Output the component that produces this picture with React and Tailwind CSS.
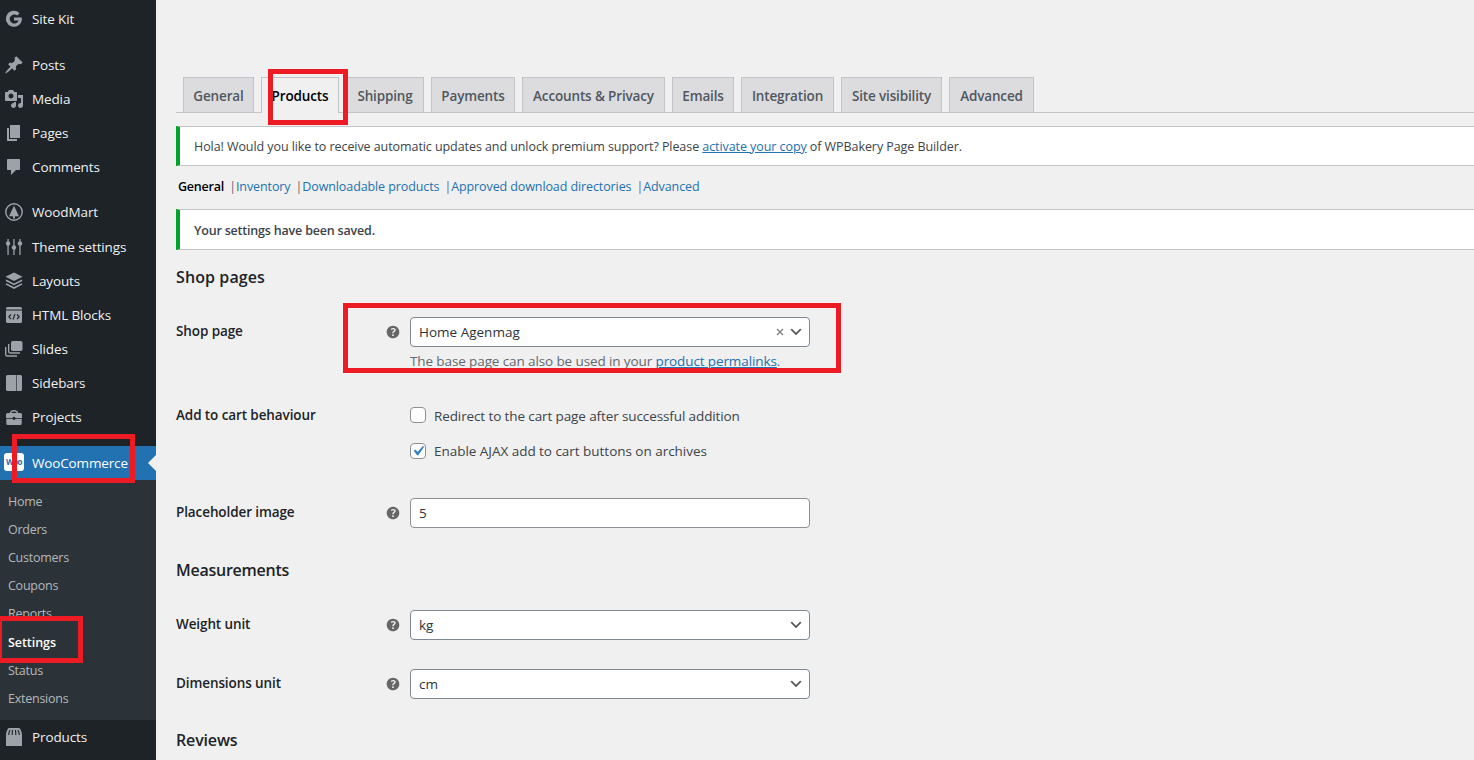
import React from "react";

function Icon({ children, className = "h-5 w-5" }) {
  return (
    <svg viewBox="0 0 20 20" className={"shrink-0 " + className} fill="currentColor">
      {children}
    </svg>
  );
}

const icons = {
  sitekit: <path d="M17.800 8.500H10v3.100h4.600a4.600 4.600 0 1 1-1.300-5.100l2.300-2.300A8 8 0 1 0 17.900 10c0-.5 0-1-.1-1.500z" />,
  posts: (
    <path d="M10.44 3.02l1.82-1.82 6.36 6.35-1.83 1.82c-1.05-.68-2.48-.57-3.41.36l-.75.75c-.92.93-1.04 2.35-.35 3.41l-1.83 1.82-2.41-2.41-2.8 2.79c-.42.42-3.38 2.71-3.8 2.29s1.86-3.39 2.28-3.81l2.79-2.79L4.1 9.36l1.83-1.82c1.05.69 2.48.57 3.4-.36l.75-.75c.93-.92 1.05-2.35.36-3.41z" />
  ),
  media: (
    <path d="M13 11V4c0-.55-.45-1-1-1h-1.67L9 1H5L3.67 3H2c-.55 0-1 .45-1 1v7c0 .55.45 1 1 1h10c.55 0 1-.45 1-1zM7 4.5c1.38 0 2.5 1.12 2.5 2.5S8.38 9.5 7 9.5 4.5 8.38 4.5 7 5.62 4.5 7 4.5zM14 6h5v10.500c0 1.38-1.12 2.5-2.5 2.5S14 17.88 14 16.5s1.12-2.5 2.5-2.5c.17 0 .34.02.5.05V9h-3V6zm-4 8.050V13h2v3.500c0 1.38-1.12 2.5-2.5 2.5S7 17.88 7 16.5 8.12 14 9.5 14c.17 0 .34.02.5.050z" />
  ),
  pages: <path d="M6 15V2h10v13H6zm-1 1h8v2H3V5h2v11z" />,
  comments: <path d="M4 2h11c.55 0 1 .45 1 1v9c0 .55-.45 1-1 1h-3l-5 5v-5H4c-.55 0-1-.45-1-1V3c0-.55.45-1 1-1z" />,
  woodmart: (
    <>
      <circle cx="10" cy="10" r="8.200" fill="none" stroke="currentColor" strokeWidth="1.400" />
      <path d="M10 3.800l5 10.400h-4V16.500H9v-2.300H5z" />
    </>
  ),
  theme: (
    <>
      <path d="M3.400 2h1.300v16H3.400zM9.300 2h1.300v16H9.300zM15.300 2h1.300v16h-1.300z" />
      <circle cx="4.050" cy="6.500" r="2.200" />
      <circle cx="9.950" cy="10.500" r="2.200" />
      <circle cx="15.950" cy="6.500" r="2.200" />
    </>
  ),
  layouts: (
    <>
      <path d="M10 1.500l8.500 4.300L10 10.100 1.500 5.800z" />
      <path d="M2 9.300l8 4.100 8-4.100M2 12.900l8 4.100 8-4.100" fill="none" stroke="currentColor" strokeWidth="1.600" />
    </>
  ),
  blocks: (
    <>
      <path d="M3.500 2h13A1.500 1.500 0 0 1 18 3.500V4.600H2V3.500A1.500 1.500 0 0 1 3.500 2zM2 5.400h16v11.100a1.500 1.500 0 0 1-1.500 1.500h-13A1.500 1.500 0 0 1 2 16.500z" />
      <path d="M7 9.500L4.800 11.800 7 14M13 9.500l2.200 2.300L13 14M11 9l-2 5.500" fill="none" stroke="#1d2327" strokeWidth="1.100" />
    </>
  ),
  slides: (
    <>
      <rect x="7" y="2" width="11.500" height="10" rx="1.800" />
      <path d="M4.700 5v7.500a1.500 1.500 0 0 0 1.500 1.500H16M1.700 8v7.500a1.500 1.500 0 0 0 1.500 1.500H13" fill="none" stroke="currentColor" strokeWidth="1.400" />
    </>
  ),
  sidebars: (
    <path d="M3.500 2H12.200v16H3.500A1.500 1.500 0 0 1 2 16.500v-13A1.500 1.500 0 0 1 3.500 2zM12.800 2h3.700A1.500 1.500 0 0 1 18 3.500v13a1.500 1.500 0 0 1-1.500 1.500H12.800z" />
  ),
  projects: (
    <>
      <path d="M6.500 6.500A3.500 2.800 0 0 1 13.500 6.500" fill="none" stroke="currentColor" strokeWidth="1.400" />
      <path d="M3.500 6h13A1.500 1.500 0 0 1 18 7.500v3.500h-6.800V10H8.800v1H2V7.500A1.500 1.500 0 0 1 3.500 6zM2.300 11.800h6.500v1h2.400v-1h6.500v4.700a1.500 1.500 0 0 1-1.500 1.500H3.800a1.500 1.500 0 0 1-1.500-1.500z" />
    </>
  ),
  products: (
    <>
      <path d="M4.500 1h11c1.500 1.500 2.500 4.500 2.500 7v11H2V8c0-2.500 1-5.500 2.500-7z" />
      <path d="M6 3c-1 1.500-1.300 3-1.300 5M8.600 3c-.4 1.500-.4 3-.4 5M11.400 3c.4 1.500.4 3 .4 5M14 3c1 1.500 1.300 3 1.300 5" stroke="#1d2327" strokeWidth="1.100" fill="none" />
    </>
  ),
};

function MenuItem({ icon, label, className = "" }) {
  return (
    <li className={"flex h-[34px] items-center gap-2 pl-1 text-[13.5px] tracking-[-0.12px] text-[#f0f0f1] " + className}>
      <Icon className="h-5 w-5 text-[#9ca2a7]">{icons[icon]}</Icon>
      <span>{label}</span>
    </li>
  );
}

const submenu = ["Home", "Orders", "Customers", "Coupons", "Reports", "Settings", "Status", "Extensions"];

function Sidebar() {
  return (
    <aside className="w-[156px] shrink-0 bg-[#1d2327] pt-[2px]">
      <ul>
        <MenuItem icon="sitekit" label="Site Kit" />
        <MenuItem icon="posts" label="Posts" className="mt-3" />
        <MenuItem icon="media" label="Media" />
        <MenuItem icon="pages" label="Pages" />
        <MenuItem icon="comments" label="Comments" />
        <MenuItem icon="woodmart" label="WoodMart" className="mt-[11px]" />
        <MenuItem icon="theme" label="Theme settings" className="mt-px" />
        <MenuItem icon="layouts" label="Layouts" />
        <MenuItem icon="blocks" label="HTML Blocks" />
        <MenuItem icon="slides" label="Slides" />
        <MenuItem icon="sidebars" label="Sidebars" />
        <MenuItem icon="projects" label="Projects" />
        <li className="relative mt-3 flex h-[34px] items-center gap-2 bg-[#2271b1] pl-1 text-[13.5px] tracking-[-0.15px] text-white">
          <span className="mb-[2px] flex h-[18px] w-5 items-center justify-center rounded-[3px] bg-white text-[8px] leading-none font-bold tracking-[-0.5px] text-[#2271b1]">
            Woo
          </span>
          <span>WooCommerce</span>
          <svg viewBox="0 0 8 16" className="absolute top-[9px] right-0 h-4 w-2" fill="#f0f0f0">
            <path d="M8 0v16L0 8z" />
          </svg>
        </li>
        <li className="h-[240px] bg-[#2c3338] pt-2">
          <ul>
            {submenu.map((s) => (
              <li
                key={s}
                className={
                  "flex h-[28.2px] items-center pl-2 text-[12.5px] " +
                  (s === "Settings" ? "font-semibold tracking-[-0.05px] text-white" : "tracking-[-0.25px] text-[#b5b8bb]")
                }
              >
                {s}
              </li>
            ))}
          </ul>
        </li>
        <MenuItem icon="products" label="Products" />
      </ul>
    </aside>
  );
}

const tabs = [
  ["General", "w-[71px]"],
  ["Products", "w-[78px]"],
  ["Shipping", "w-[78px]"],
  ["Payments", "w-[84px]"],
  ["Accounts & Privacy", "w-[143px]"],
  ["Emails", "w-[62px]"],
  ["Integration", "w-[93px]"],
  ["Site visibility", "w-[101px]"],
  ["Advanced", "w-[85px]"],
];

function Tabs() {
  return (
    <nav className="flex h-9 gap-[7px] border-b border-[#c3c4c7] pl-[7px]">
      {tabs.map(([t, w]) => (
        <div
          key={t}
          className={
            "flex shrink-0 items-center justify-center border border-b-0 border-[#c3c4c7] text-[13.5px] font-semibold tracking-[-0.15px] whitespace-nowrap " +
            w +
            (t === "Products" ? " h-9 bg-[#f0f0f0] pt-px text-black" : " h-[35px] bg-[#dcdcde] pt-[2px] text-[#50575e]")
          }
        >
          {t}
        </div>
      ))}
    </nav>
  );
}

function Help() {
  return (
    <Icon className="h-[18px] w-[18px] text-[#666]">
      <path d="M17 10c0-3.870-3.140-7-7-7-3.870 0-7 3.130-7 7s3.130 7 7 7c3.860 0 7-3.130 7-7zm-6.300 1.480H9.140v-.43c0-.38.08-.7.24-.98s.46-.57.88-.89c.41-.29.68-.53.81-.71.14-.18.2-.39.2-.62 0-.25-.09-.44-.28-.58-.19-.13-.45-.19-.79-.19-.58 0-1.250.19-2 .57l-.64-1.280c.87-.49 1.800-.74 2.770-.74.81 0 1.450.2 1.920.58.48.39.71.91.71 1.550 0 .43-.09.8-.29 1.110-.19.32-.57.67-1.110 1.060-.38.28-.61.49-.71.63-.1.15-.15.34-.15.57v.35zm-1.470 2.740c-.18-.17-.27-.42-.27-.73 0-.33.08-.58.26-.75s.43-.25.77-.25c.32 0 .57.09.75.26s.27.42.27.74c0 .3-.09.55-.27.72-.18.18-.43.27-.75.27-.33 0-.58-.09-.76-.26z" />
    </Icon>
  );
}

function Row({ label, help, className, children }) {
  return (
    <div className={"flex " + className}>
      <div className="flex h-[29px] w-[234px] items-center justify-between pr-2 text-[13.5px] font-semibold tracking-[-0.1px] text-[#1d2327]">
        <span>{label}</span>
        {help && <Help />}
      </div>
      <div>{children}</div>
    </div>
  );
}

function Field({ value, clear, arrow }) {
  return (
    <div
      className={
        "flex h-[30px] w-[400px] items-center rounded-[4px] border bg-white pr-[5px] pl-2 text-[13.5px] text-[#2c3338] " +
        (arrow ? "border-[#7e8993]" : "border-[#8c8f94]")
      }
    >
      <span className="grow">{value}</span>
      {clear && (
        <svg viewBox="0 0 8 8" className="mr-1 h-2 w-2" fill="none" stroke="#888" strokeWidth="1.500">
          <path d="M1 1l6 6M7 1L1 7" />
        </svg>
      )}
      {arrow && (
        <svg viewBox="0 0 20 20" className="h-4 w-4" fill="#555">
          <path d="M5 6l5 5 5-5 2 1-7 7-7-7 2-1z" />
        </svg>
      )}
    </div>
  );
}

function Check({ checked, label, boxClass = "", textClass }) {
  return (
    <div className="flex h-5 items-start gap-2 text-[13.5px] leading-5 text-[#3c434a]">
      <span className={"flex h-4 w-4 items-center justify-center rounded-[4px] border border-[#8c8f94] bg-white " + boxClass}>
        {checked && (
          <svg viewBox="0 0 20 20" className="h-5 w-5 shrink-0" fill="#3582c4">
            <path d="M14.830 4.890l1.340.94-5.810 8.380H9.020L5.780 9.670l1.340-1.250 2.570 2.400z" />
          </svg>
        )}
      </span>
      <span className={textClass}>{label}</span>
    </div>
  );
}

function Notice({ className, children }) {
  return (
    <div
      className={
        "flex items-center border border-r-0 border-l-4 border-[#c3c4c7] border-l-[#00a32a] bg-white pl-[14px] text-[12.5px] text-[#3c434a] " +
        className
      }
    >
      {children}
    </div>
  );
}

function Heading({ className, children }) {
  return <h2 className={"h-[26px] text-[16px] leading-[26px] font-semibold text-[#1d2327] " + className}>{children}</h2>;
}

const sections = ["General", "Inventory", "Downloadable products", "Approved download directories", "Advanced"];

function Highlight({ className }) {
  return <div className={"pointer-events-none absolute border-[5px] border-[#ed1c24] " + className} />;
}

export default function App() {
  return (
    <div className="relative flex h-[760px] w-[1474px] overflow-hidden bg-[#f0f0f0] font-['Open_Sans','Noto_Sans',sans-serif]">
      <Sidebar />
      <main className="min-w-0 grow pt-[77px] pl-5">
        <Tabs />
        <Notice className="mt-[13px] h-10 pt-[2px] tracking-[-0.072px]">
          <p>
            Hola! Would you like to receive automatic updates and unlock premium support? Please{" "}
            <a className="text-[#2271b1] underline">activate your copy</a> of WPBakery Page Builder.
          </p>
        </Notice>
        <ul className="mt-[11px] flex h-5 items-center pl-[2px] text-[12.5px] tracking-[-0.1px] text-[#2271b1]">
          {sections.map((s, i) => (
            <li key={s} className="flex whitespace-pre">
              <span className={i === 0 ? "font-semibold tracking-[-0.2px] text-black" : ""}>{s}</span>
              {i < sections.length - 1 && <span className="pl-[5px] text-[#646970]">|</span>}
            </li>
          ))}
        </ul>
        <Notice className="mt-3 h-[41px] pt-[3px] font-semibold tracking-[-0.19px]">Your settings have been saved.</Notice>
        <Heading className="mt-[14px] tracking-[0.1px]">Shop pages</Heading>
        <Row label="Shop page" help className="mt-[27px] h-[84px]">
          <Field value="Home Agenmag" clear arrow />
          <p className="mt-1 text-[13.5px] leading-5 tracking-[-0.11px] text-[#646970]">
            The base page can also be used in your <a className="text-[#2271b1] underline">product permalinks</a>.
          </p>
        </Row>
        <Row label="Add to cart behaviour" className="h-[97px]">
          <div className="flex flex-col gap-[15px] pt-[5px]">
            <Check label="Redirect to the cart page after successful addition" boxClass="mt-px" textClass="tracking-[-0.11px]" />
            <Check checked label="Enable AJAX add to cart buttons on archives" boxClass="mt-[2px]" textClass="tracking-[-0.03px]" />
          </div>
        </Row>
        <Row label="Placeholder image" help className="h-[59px]">
          <Field value="5" />
        </Row>
        <Heading className="tracking-[-0.25px]">Measurements</Heading>
        <Row label="Weight unit" help className="mt-[27px] h-[59px]">
          <Field value="kg" arrow />
        </Row>
        <Row label="Dimensions unit" help className="h-[58px]">
          <Field value="cm" arrow />
        </Row>
        <Heading className="tracking-[-0.15px]">Reviews</Heading>
      </main>
      <Highlight className="top-[69px] left-[268px] h-[56px] w-[80px]" />
      <Highlight className="top-[303px] left-[343px] h-[70px] w-[498px]" />
      <Highlight className="top-[434px] left-[12px] h-[49px] w-[123px]" />
      <Highlight className="top-[616px] left-[-3px] h-[47px] w-[86px]" />
    </div>
  );
}
